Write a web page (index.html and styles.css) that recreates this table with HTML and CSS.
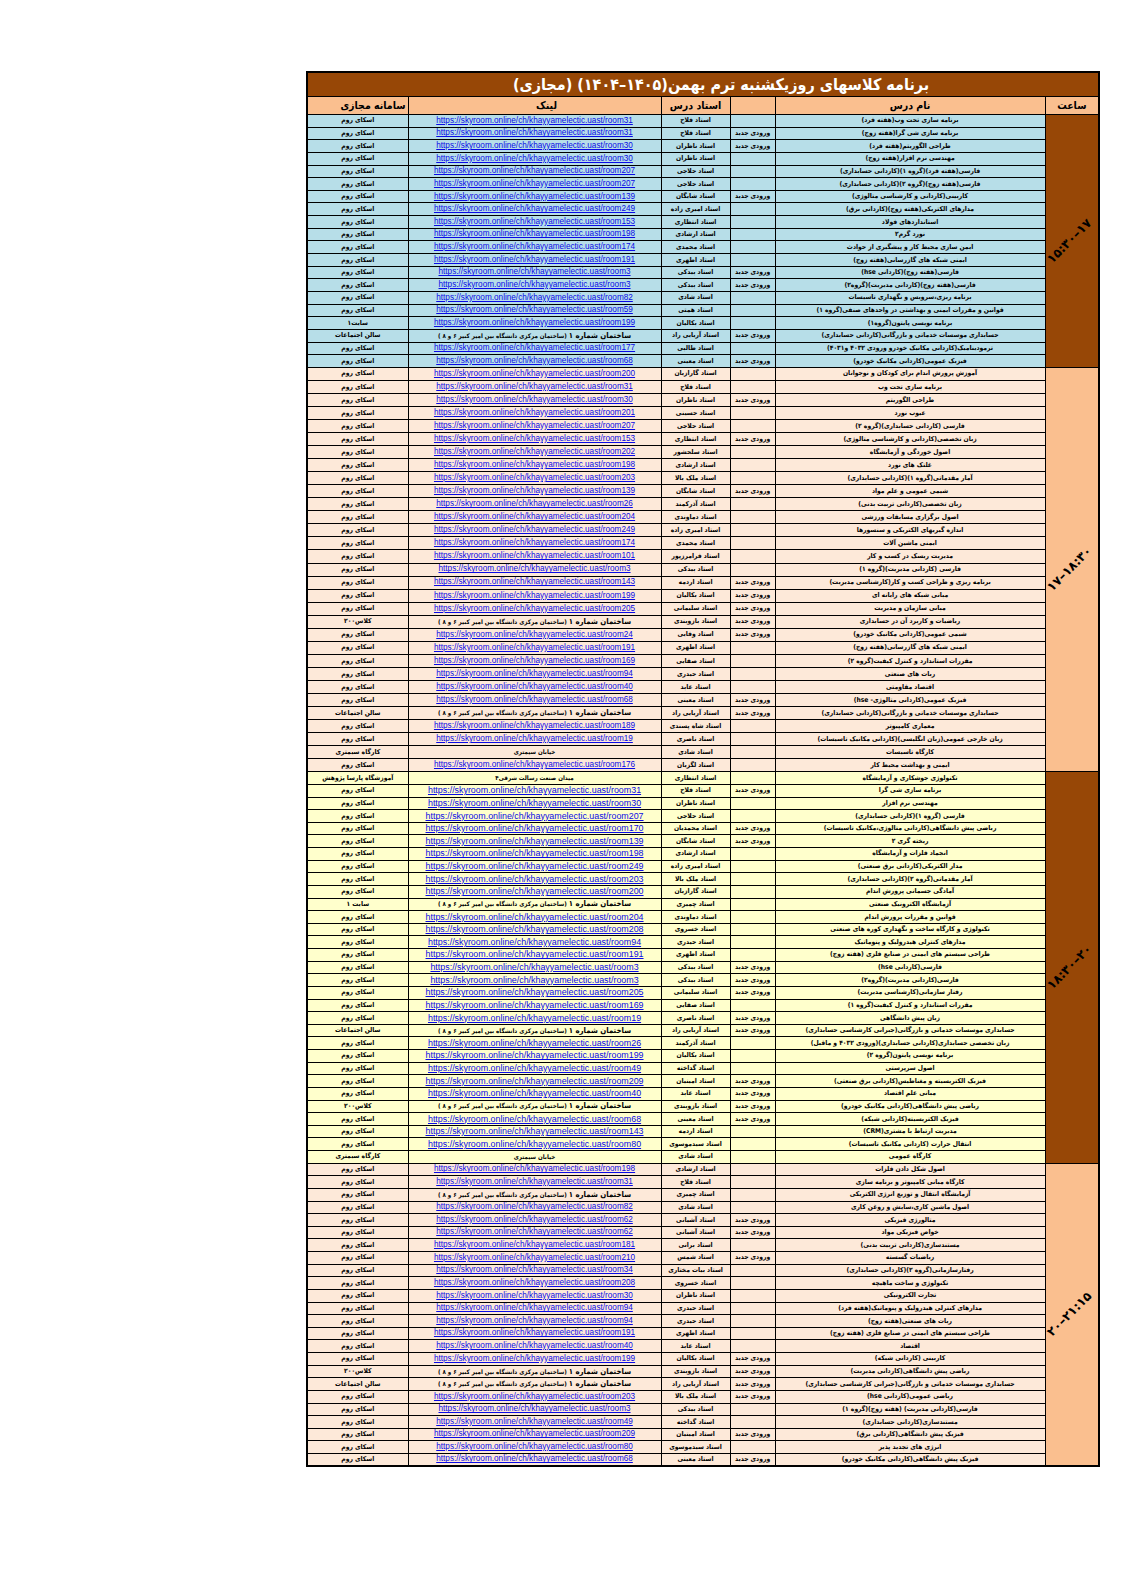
FILE: index.html
```html
<!DOCTYPE html>
<html lang="fa">
<head>
<meta charset="utf-8">
<title>برنامه کلاسهای روزیکشنبه</title>
<link rel="stylesheet" href="styles.css">
</head>
<body>
<table class="sheet" dir="rtl">
<colgroup>
<col class="c-time"><col class="c-name"><col class="c-new"><col class="c-teacher"><col class="c-link"><col class="c-plat">
</colgroup>
<thead>
<tr class="title-row"><td colspan="6">برنامه کلاسهای  روزیکشنبه ترم بهمن<bdo dir="ltr">(۱۴۰۴–۱۴۰۵)</bdo> (مجازی)</td></tr>
<tr class="head-row"><th>ساعت</th><th>نام درس</th><th></th><th>استاد درس</th><th class="h-link">لینک</th><th class="h-plat">سامانه مجازی</th></tr>
</thead>
<tbody class="s1">
<tr><td class="time" rowspan="20"><bdo dir="ltr" class="rot">۱۵:۳۰–۱۷</bdo></td><td>برنامه سازی تحت وب(هفته فرد)</td><td></td><td>استاد فلاح</td><td><a href="https://skyroom.online/ch/khayyamelectic.uast/room31">https://skyroom.online/ch/khayyamelectic.uast/room31</a></td><td>اسکای روم</td></tr>
<tr><td>برنامه سازی شی گرا(هفته زوج)</td><td>ورودی جدید</td><td>استاد فلاح</td><td><a href="https://skyroom.online/ch/khayyamelectic.uast/room31">https://skyroom.online/ch/khayyamelectic.uast/room31</a></td><td>اسکای روم</td></tr>
<tr><td>طراحی الگوریتم(هفته فرد)</td><td>ورودی جدید</td><td>استاد ناظران</td><td><a href="https://skyroom.online/ch/khayyamelectic.uast/room30">https://skyroom.online/ch/khayyamelectic.uast/room30</a></td><td>اسکای روم</td></tr>
<tr><td>مهندسی نرم افزار(هفته زوج)</td><td></td><td>استاد ناظران</td><td><a href="https://skyroom.online/ch/khayyamelectic.uast/room30">https://skyroom.online/ch/khayyamelectic.uast/room30</a></td><td>اسکای روم</td></tr>
<tr><td>فارسی(هفته فرد)(گروه ۱)(کاردانی حسابداری)</td><td></td><td>استاد حلاجی</td><td><a href="https://skyroom.online/ch/khayyamelectic.uast/room207">https://skyroom.online/ch/khayyamelectic.uast/room207</a></td><td>اسکای روم</td></tr>
<tr><td>فارسی(هفته زوج)(گروه ۲)(کاردانی حسابداری)</td><td></td><td>استاد حلاجی</td><td><a href="https://skyroom.online/ch/khayyamelectic.uast/room207">https://skyroom.online/ch/khayyamelectic.uast/room207</a></td><td>اسکای روم</td></tr>
<tr><td>کاربینی(کاردانی و کارشناسی متالوژی)</td><td>ورودی جدید</td><td>استاد شایگان</td><td><a href="https://skyroom.online/ch/khayyamelectic.uast/room139">https://skyroom.online/ch/khayyamelectic.uast/room139</a></td><td>اسکای روم</td></tr>
<tr><td>مدارهای الکتریکی(هفته زوج)(کاردانی برق)</td><td></td><td>استاد امیری زاده</td><td><a href="https://skyroom.online/ch/khayyamelectic.uast/room249">https://skyroom.online/ch/khayyamelectic.uast/room249</a></td><td>اسکای روم</td></tr>
<tr><td>استانداردهای فولاد</td><td></td><td>استاد انتظاری</td><td><a href="https://skyroom.online/ch/khayyamelectic.uast/room153">https://skyroom.online/ch/khayyamelectic.uast/room153</a></td><td>اسکای روم</td></tr>
<tr><td>نورد گرم۲</td><td></td><td>استاد ارشادی</td><td><a href="https://skyroom.online/ch/khayyamelectic.uast/room198">https://skyroom.online/ch/khayyamelectic.uast/room198</a></td><td>اسکای روم</td></tr>
<tr><td>ایمن سازی محیط کار و پیشگیری از حوادث</td><td></td><td>استاد محمدی</td><td><a href="https://skyroom.online/ch/khayyamelectic.uast/room174">https://skyroom.online/ch/khayyamelectic.uast/room174</a></td><td>اسکای روم</td></tr>
<tr><td>ایمنی شبکه های گازرسانی(هفته زوج)</td><td></td><td>استاد اطهری</td><td><a href="https://skyroom.online/ch/khayyamelectic.uast/room191">https://skyroom.online/ch/khayyamelectic.uast/room191</a></td><td>اسکای روم</td></tr>
<tr><td>فارسی(هفته زوج)(کاردانی hse)</td><td>ورودی جدید</td><td>استاد بیدکی</td><td><a href="https://skyroom.online/ch/khayyamelectic.uast/room3">https://skyroom.online/ch/khayyamelectic.uast/room3</a></td><td>اسکای روم</td></tr>
<tr><td>فارسی(هفته زوج)(کاردانی مدیریت)(گروه۲)</td><td>ورودی جدید</td><td>استاد بیدکی</td><td><a href="https://skyroom.online/ch/khayyamelectic.uast/room3">https://skyroom.online/ch/khayyamelectic.uast/room3</a></td><td>اسکای روم</td></tr>
<tr><td>برنامه ریزی،سرویس و نگهداری تاسیسات</td><td></td><td>استاد شادی</td><td><a href="https://skyroom.online/ch/khayyamelectic.uast/room82">https://skyroom.online/ch/khayyamelectic.uast/room82</a></td><td>اسکای روم</td></tr>
<tr><td>قوانین و مقررات ایمنی و بهداشتی در واحدهای صنفی(گروه ۱)</td><td></td><td>استاد همتی</td><td><a href="https://skyroom.online/ch/khayyamelectic.uast/room59">https://skyroom.online/ch/khayyamelectic.uast/room59</a></td><td>اسکای روم</td></tr>
<tr><td>برنامه نویسی پایتون(گروه۱)</td><td></td><td>استاد بکالیان</td><td><a href="https://skyroom.online/ch/khayyamelectic.uast/room199">https://skyroom.online/ch/khayyamelectic.uast/room199</a></td><td>سایت۱</td></tr>
<tr><td>حسابداری موسسات خدماتی و بازرگانی(کاردانی حسابداری)</td><td>ورودی جدید</td><td>استاد آریایی راد</td><td class="loc"><span class="big">ساختمان شماره ۱</span>   (ساختمان مرکزی دانشگاه بین امیر کبیر ۶ و ۸ )</td><td>سالن اجتماعات</td></tr>
<tr><td>ترمودینامیک(کاردانی مکانیک خودرو ورودی ۴۰۳۲ و۴۰۳۱)</td><td></td><td>استاد طالبی</td><td><a href="https://skyroom.online/ch/khayyamelectic.uast/room177">https://skyroom.online/ch/khayyamelectic.uast/room177</a></td><td>اسکای روم</td></tr>
<tr><td>فیزیک عمومی(کاردانی مکانیک خودرو)</td><td>ورودی جدید</td><td>استاد معینی</td><td><a href="https://skyroom.online/ch/khayyamelectic.uast/room68">https://skyroom.online/ch/khayyamelectic.uast/room68</a></td><td>اسکای روم</td></tr>
</tbody>
<tbody class="s2">
<tr><td class="time" rowspan="31"><bdo dir="ltr" class="rot">۱۷–۱۸:۳۰</bdo></td><td>آموزش پرورش اندام برای کودکان و نوجوانان</td><td></td><td>استاد گارازیان</td><td><a href="https://skyroom.online/ch/khayyamelectic.uast/room200">https://skyroom.online/ch/khayyamelectic.uast/room200</a></td><td>اسکای روم</td></tr>
<tr><td>برنامه سازی تحت وب</td><td></td><td>استاد فلاح</td><td><a href="https://skyroom.online/ch/khayyamelectic.uast/room31">https://skyroom.online/ch/khayyamelectic.uast/room31</a></td><td>اسکای روم</td></tr>
<tr><td>طراحی الگوریتم</td><td>ورودی جدید</td><td>استاد ناظران</td><td><a href="https://skyroom.online/ch/khayyamelectic.uast/room30">https://skyroom.online/ch/khayyamelectic.uast/room30</a></td><td>اسکای روم</td></tr>
<tr><td>عیوب نورد</td><td></td><td>استاد حسینی</td><td><a href="https://skyroom.online/ch/khayyamelectic.uast/room201">https://skyroom.online/ch/khayyamelectic.uast/room201</a></td><td>اسکای روم</td></tr>
<tr><td>فارسی (کاردانی حسابداری)(گروه ۲)</td><td></td><td>استاد حلاجی</td><td><a href="https://skyroom.online/ch/khayyamelectic.uast/room207">https://skyroom.online/ch/khayyamelectic.uast/room207</a></td><td>اسکای روم</td></tr>
<tr><td>زبان تخصصی(کاردانی و کارشناسی متالوژی)</td><td>ورودی جدید</td><td>استاد انتظاری</td><td><a href="https://skyroom.online/ch/khayyamelectic.uast/room153">https://skyroom.online/ch/khayyamelectic.uast/room153</a></td><td>اسکای روم</td></tr>
<tr><td>اصول خوردگی و آزمایشگاه</td><td></td><td>استاد سلحشور</td><td><a href="https://skyroom.online/ch/khayyamelectic.uast/room202">https://skyroom.online/ch/khayyamelectic.uast/room202</a></td><td>اسکای روم</td></tr>
<tr><td>غلتک های نورد</td><td></td><td>استاد ارشادی</td><td><a href="https://skyroom.online/ch/khayyamelectic.uast/room198">https://skyroom.online/ch/khayyamelectic.uast/room198</a></td><td>اسکای روم</td></tr>
<tr><td>آمار مقدماتی(گروه ۱)(کاردانی حسابداری)</td><td></td><td>استاد ملک بالا</td><td><a href="https://skyroom.online/ch/khayyamelectic.uast/room203">https://skyroom.online/ch/khayyamelectic.uast/room203</a></td><td>اسکای روم</td></tr>
<tr><td>شیمی عمومی و علم مواد</td><td>ورودی جدید</td><td>استاد شایگان</td><td><a href="https://skyroom.online/ch/khayyamelectic.uast/room139">https://skyroom.online/ch/khayyamelectic.uast/room139</a></td><td>اسکای روم</td></tr>
<tr><td>زبان تخصصی(کاردانی تربیت بدنی)</td><td></td><td>استاد آذرکمند</td><td><a href="https://skyroom.online/ch/khayyamelectic.uast/room26">https://skyroom.online/ch/khayyamelectic.uast/room26</a></td><td>اسکای روم</td></tr>
<tr><td>اصول برگزاری مسابقات ورزشی</td><td></td><td>استاد دماوندی</td><td><a href="https://skyroom.online/ch/khayyamelectic.uast/room204">https://skyroom.online/ch/khayyamelectic.uast/room204</a></td><td>اسکای روم</td></tr>
<tr><td>اندازه گیریهای الکتریکی و سنسورها</td><td></td><td>استاد امیری زاده</td><td><a href="https://skyroom.online/ch/khayyamelectic.uast/room249">https://skyroom.online/ch/khayyamelectic.uast/room249</a></td><td>اسکای روم</td></tr>
<tr><td>ایمنی ماشین آلات</td><td></td><td>استاد محمدی</td><td><a href="https://skyroom.online/ch/khayyamelectic.uast/room174">https://skyroom.online/ch/khayyamelectic.uast/room174</a></td><td>اسکای روم</td></tr>
<tr><td>مدیریت ریسک در کسب و کار</td><td></td><td>استاد فرامرزپور</td><td><a href="https://skyroom.online/ch/khayyamelectic.uast/room101">https://skyroom.online/ch/khayyamelectic.uast/room101</a></td><td>اسکای روم</td></tr>
<tr><td>فارسی (کاردانی مدیریت)(گروه ۱)</td><td></td><td>استاد بیدکی</td><td><a href="https://skyroom.online/ch/khayyamelectic.uast/room3">https://skyroom.online/ch/khayyamelectic.uast/room3</a></td><td>اسکای روم</td></tr>
<tr><td>برنامه ریزی و طراحی کسب و کار(کارشناسی مدیریت)</td><td>ورودی جدید</td><td>استاد اردمه</td><td><a href="https://skyroom.online/ch/khayyamelectic.uast/room143">https://skyroom.online/ch/khayyamelectic.uast/room143</a></td><td>اسکای روم</td></tr>
<tr><td>مبانی شبکه های رایانه ای</td><td>ورودی جدید</td><td>استاد بکالیان</td><td><a href="https://skyroom.online/ch/khayyamelectic.uast/room199">https://skyroom.online/ch/khayyamelectic.uast/room199</a></td><td>اسکای روم</td></tr>
<tr><td>مبانی سازمان و مدیریت</td><td>ورودی جدید</td><td>استاد سلیمانی</td><td><a href="https://skyroom.online/ch/khayyamelectic.uast/room205">https://skyroom.online/ch/khayyamelectic.uast/room205</a></td><td>اسکای روم</td></tr>
<tr><td>ریاضیات و کاربرد آن در حسابداری</td><td>ورودی جدید</td><td>استاد بازوبندی</td><td class="loc"><span class="big">ساختمان شماره ۱</span>   (ساختمان مرکزی دانشگاه بین امیر کبیر ۶ و ۸ )</td><td>کلاس۲۰۰</td></tr>
<tr><td>شیمی عمومی(کاردانی مکانیک خودرو)</td><td>ورودی جدید</td><td>استاد وفایی</td><td><a href="https://skyroom.online/ch/khayyamelectic.uast/room24">https://skyroom.online/ch/khayyamelectic.uast/room24</a></td><td>اسکای روم</td></tr>
<tr><td>ایمنی شبکه های گازرسانی(هفته زوج)</td><td></td><td>استاد اطهری</td><td><a href="https://skyroom.online/ch/khayyamelectic.uast/room191">https://skyroom.online/ch/khayyamelectic.uast/room191</a></td><td>اسکای روم</td></tr>
<tr><td>مقررات استاندارد و کنترل کیفیت(گروه ۲)</td><td></td><td>استاد صفایی</td><td><a href="https://skyroom.online/ch/khayyamelectic.uast/room169">https://skyroom.online/ch/khayyamelectic.uast/room169</a></td><td>اسکای روم</td></tr>
<tr><td>ربات های صنعتی</td><td></td><td>استاد حیدری</td><td><a href="https://skyroom.online/ch/khayyamelectic.uast/room94">https://skyroom.online/ch/khayyamelectic.uast/room94</a></td><td>اسکای روم</td></tr>
<tr><td>اقتصاد مقاومتی</td><td></td><td>استاد عابد</td><td><a href="https://skyroom.online/ch/khayyamelectic.uast/room40">https://skyroom.online/ch/khayyamelectic.uast/room40</a></td><td>اسکای روم</td></tr>
<tr><td>فیزیک عمومی(کاردانی متالوژی- hse)</td><td>ورودی جدید</td><td>استاد معینی</td><td><a href="https://skyroom.online/ch/khayyamelectic.uast/room68">https://skyroom.online/ch/khayyamelectic.uast/room68</a></td><td>اسکای روم</td></tr>
<tr><td>حسابداری موسسات خدماتی و بازرگانی(کاردانی حسابداری)</td><td>ورودی جدید</td><td>استاد آریایی راد</td><td class="loc"><span class="big">ساختمان شماره ۱</span>   (ساختمان مرکزی دانشگاه بین امیر کبیر ۶ و ۸ )</td><td>سالن اجتماعات</td></tr>
<tr><td>معماری کامپیوتر</td><td></td><td>استاد شاه پسندی</td><td><a href="https://skyroom.online/ch/khayyamelectic.uast/room189">https://skyroom.online/ch/khayyamelectic.uast/room189</a></td><td>اسکای روم</td></tr>
<tr><td>زبان خارجی عمومی(زبان انگلیسی)(کاردانی مکانیک تاسیسات)</td><td></td><td>استاد ناصری</td><td><a href="https://skyroom.online/ch/khayyamelectic.uast/room19">https://skyroom.online/ch/khayyamelectic.uast/room19</a></td><td>اسکای روم</td></tr>
<tr><td>کارگاه تاسیسات</td><td></td><td>استاد شادی</td><td class="loc">خیابان سیمتری</td><td>کارگاه سیمتری</td></tr>
<tr><td>ایمنی و بهداشت محیط کار</td><td></td><td>استاد لگزیان</td><td><a href="https://skyroom.online/ch/khayyamelectic.uast/room176">https://skyroom.online/ch/khayyamelectic.uast/room176</a></td><td>اسکای روم</td></tr>
</tbody>
<tbody class="s3">
<tr><td class="time" rowspan="31"><bdo dir="ltr" class="rot">۱۸:۳۰–۲۰</bdo></td><td>تکنولوژی جوشکاری و آزمایشگاه</td><td></td><td>استاد انتظاری</td><td class="loc">میدان صنعت رسالت شرقی۴</td><td>آموزشگاه پارسا پژوهش</td></tr>
<tr><td>برنامه سازی شی گرا</td><td>ورودی جدید</td><td>استاد فلاح</td><td><a href="https://skyroom.online/ch/khayyamelectic.uast/room31">https://skyroom.online/ch/khayyamelectic.uast/room31</a></td><td>اسکای روم</td></tr>
<tr><td>مهندسی نرم افزار</td><td></td><td>استاد ناظران</td><td><a href="https://skyroom.online/ch/khayyamelectic.uast/room30">https://skyroom.online/ch/khayyamelectic.uast/room30</a></td><td>اسکای روم</td></tr>
<tr><td>فارسی (گروه ۱)(کاردانی حسابداری)</td><td></td><td>استاد حلاجی</td><td><a href="https://skyroom.online/ch/khayyamelectic.uast/room207">https://skyroom.online/ch/khayyamelectic.uast/room207</a></td><td>اسکای روم</td></tr>
<tr><td>ریاضی پیش دانشگاهی(کاردانی متالوژی،مکانیک تاسیسات)</td><td>ورودی جدید</td><td>استاد محمدیان</td><td><a href="https://skyroom.online/ch/khayyamelectic.uast/room170">https://skyroom.online/ch/khayyamelectic.uast/room170</a></td><td>اسکای روم</td></tr>
<tr><td>ریخته گری ۲</td><td>ورودی جدید</td><td>استاد شایگان</td><td><a href="https://skyroom.online/ch/khayyamelectic.uast/room139">https://skyroom.online/ch/khayyamelectic.uast/room139</a></td><td>اسکای روم</td></tr>
<tr><td>انجماد فلزات و آزمایشگاه</td><td></td><td>استاد ارشادی</td><td><a href="https://skyroom.online/ch/khayyamelectic.uast/room198">https://skyroom.online/ch/khayyamelectic.uast/room198</a></td><td>اسکای روم</td></tr>
<tr><td>مدار الکتریکی(کاردانی برق صنعتی)</td><td></td><td>استاد امیری زاده</td><td><a href="https://skyroom.online/ch/khayyamelectic.uast/room249">https://skyroom.online/ch/khayyamelectic.uast/room249</a></td><td>اسکای روم</td></tr>
<tr><td>آمار مقدماتی(گروه ۲)(کاردانی حسابداری)</td><td></td><td>استاد ملک بالا</td><td><a href="https://skyroom.online/ch/khayyamelectic.uast/room203">https://skyroom.online/ch/khayyamelectic.uast/room203</a></td><td>اسکای روم</td></tr>
<tr><td>آمادگی جسمانی پرورش اندام</td><td></td><td>استاد گارازیان</td><td><a href="https://skyroom.online/ch/khayyamelectic.uast/room200">https://skyroom.online/ch/khayyamelectic.uast/room200</a></td><td>اسکای روم</td></tr>
<tr><td>آزمایشگاه الکترونیک صنعتی</td><td></td><td>استاد چمیری</td><td class="loc"><span class="big">ساختمان شماره ۱</span>   (ساختمان مرکزی دانشگاه بین امیر کبیر ۶ و ۸ )</td><td>سایت ۱</td></tr>
<tr><td>قوانین و مقررات پرورش اندام</td><td></td><td>استاد دماوندی</td><td><a href="https://skyroom.online/ch/khayyamelectic.uast/room204">https://skyroom.online/ch/khayyamelectic.uast/room204</a></td><td>اسکای روم</td></tr>
<tr><td>تکنولوژی و کارگاه ساخت و نگهداری کوره های صنعتی</td><td></td><td>استاد خسروی</td><td><a href="https://skyroom.online/ch/khayyamelectic.uast/room208">https://skyroom.online/ch/khayyamelectic.uast/room208</a></td><td>اسکای روم</td></tr>
<tr><td>مدارهای کنترلی هیدرولیک و پنوماتیک</td><td></td><td>استاد حیدری</td><td><a href="https://skyroom.online/ch/khayyamelectic.uast/room94">https://skyroom.online/ch/khayyamelectic.uast/room94</a></td><td>اسکای روم</td></tr>
<tr><td>طراحی سیستم های ایمنی در صنایع فلزی (هفته زوج)</td><td></td><td>استاد اطهری</td><td><a href="https://skyroom.online/ch/khayyamelectic.uast/room191">https://skyroom.online/ch/khayyamelectic.uast/room191</a></td><td>اسکای روم</td></tr>
<tr><td>فارسی(کاردانی hse)</td><td>ورودی جدید</td><td>استاد بیدکی</td><td><a href="https://skyroom.online/ch/khayyamelectic.uast/room3">https://skyroom.online/ch/khayyamelectic.uast/room3</a></td><td>اسکای روم</td></tr>
<tr><td>فارسی(کاردانی مدیریت)(گروه۲)</td><td>ورودی جدید</td><td>استاد بیدکی</td><td><a href="https://skyroom.online/ch/khayyamelectic.uast/room3">https://skyroom.online/ch/khayyamelectic.uast/room3</a></td><td>اسکای روم</td></tr>
<tr><td>رفتار سازمانی(کارشناسی مدیریت)</td><td>ورودی جدید</td><td>استاد سلیمانی</td><td><a href="https://skyroom.online/ch/khayyamelectic.uast/room205">https://skyroom.online/ch/khayyamelectic.uast/room205</a></td><td>اسکای روم</td></tr>
<tr><td>مقررات استاندارد و کنترل کیفیت(گروه ۱)</td><td></td><td>استاد صفایی</td><td><a href="https://skyroom.online/ch/khayyamelectic.uast/room169">https://skyroom.online/ch/khayyamelectic.uast/room169</a></td><td>اسکای روم</td></tr>
<tr><td>زبان پیش دانشگاهی</td><td>ورودی جدید</td><td>استاد ناصری</td><td><a href="https://skyroom.online/ch/khayyamelectic.uast/room19">https://skyroom.online/ch/khayyamelectic.uast/room19</a></td><td>اسکای روم</td></tr>
<tr><td>حسابداری موسسات خدماتی و بازرگانی(جبرانی کارشناسی حسابداری)</td><td>ورودی جدید</td><td>استاد آریایی راد</td><td class="loc"><span class="big">ساختمان شماره ۱</span>   (ساختمان مرکزی دانشگاه بین امیر کبیر ۶ و ۸ )</td><td>سالن اجتماعات</td></tr>
<tr><td>زبان تخصصی حسابداری(کاردانی حسابداری)(ورودی ۴۰۳۲ و ماقبل)</td><td></td><td>استاد آذرکمند</td><td><a href="https://skyroom.online/ch/khayyamelectic.uast/room26">https://skyroom.online/ch/khayyamelectic.uast/room26</a></td><td>اسکای روم</td></tr>
<tr><td>برنامه نویسی پایتون(گروه ۲)</td><td></td><td>استاد بکالیان</td><td><a href="https://skyroom.online/ch/khayyamelectic.uast/room199">https://skyroom.online/ch/khayyamelectic.uast/room199</a></td><td>اسکای روم</td></tr>
<tr><td>اصول سرپرستی</td><td></td><td>استاد گداخته</td><td><a href="https://skyroom.online/ch/khayyamelectic.uast/room49">https://skyroom.online/ch/khayyamelectic.uast/room49</a></td><td>اسکای روم</td></tr>
<tr><td>فیزیک الکتریسیته و مغناطیس(کاردانی برق صنعتی)</td><td>ورودی جدید</td><td>استاد امینیان</td><td><a href="https://skyroom.online/ch/khayyamelectic.uast/room209">https://skyroom.online/ch/khayyamelectic.uast/room209</a></td><td>اسکای روم</td></tr>
<tr><td>مبانی علم اقتصاد</td><td>ورودی جدید</td><td>استاد عابد</td><td><a href="https://skyroom.online/ch/khayyamelectic.uast/room40">https://skyroom.online/ch/khayyamelectic.uast/room40</a></td><td>اسکای روم</td></tr>
<tr><td>ریاضی پیش دانشگاهی(کاردانی مکانیک خودرو)</td><td>ورودی جدید</td><td>استاد بازوبندی</td><td class="loc"><span class="big">ساختمان شماره ۱</span>   (ساختمان مرکزی دانشگاه بین امیر کبیر ۶ و ۸ )</td><td>کلاس۲۰۰</td></tr>
<tr><td>فیزیک الکتریسیته(کاردانی شبکه)</td><td>ورودی جدید</td><td>استاد معینی</td><td><a href="https://skyroom.online/ch/khayyamelectic.uast/room68">https://skyroom.online/ch/khayyamelectic.uast/room68</a></td><td>اسکای روم</td></tr>
<tr><td>مدیریت ارتباط با مشتری(CRM)</td><td></td><td>استاد اردمه</td><td><a href="https://skyroom.online/ch/khayyamelectic.uast/room143">https://skyroom.online/ch/khayyamelectic.uast/room143</a></td><td>اسکای روم</td></tr>
<tr><td>انتقال حرارت (کاردانی مکانیک تاسیسات)</td><td></td><td>استاد سیدموسوی</td><td><a href="https://skyroom.online/ch/khayyamelectic.uast/room80">https://skyroom.online/ch/khayyamelectic.uast/room80</a></td><td>اسکای روم</td></tr>
<tr><td>کارگاه عمومی</td><td></td><td>استاد شادی</td><td class="loc">خیابان سیمتری</td><td>کارگاه سیمتری</td></tr>
</tbody>
<tbody class="s4">
<tr><td class="time" rowspan="24"><bdo dir="ltr" class="rot">۲۰–۲۱:۱۵</bdo></td><td>اصول شکل دادن فلزات</td><td></td><td>استاد ارشادی</td><td><a href="https://skyroom.online/ch/khayyamelectic.uast/room198">https://skyroom.online/ch/khayyamelectic.uast/room198</a></td><td>اسکای روم</td></tr>
<tr><td>کارگاه مبانی کامپیوتر و برنامه سازی</td><td></td><td>استاد فلاح</td><td><a href="https://skyroom.online/ch/khayyamelectic.uast/room31">https://skyroom.online/ch/khayyamelectic.uast/room31</a></td><td>اسکای روم</td></tr>
<tr><td>آزمایشگاه انتقال و توزیع انرژی الکتریکی</td><td></td><td>استاد چمیری</td><td class="loc"><span class="big">ساختمان شماره ۱</span>   (ساختمان مرکزی دانشگاه بین امیر کبیر ۶ و ۸ )</td><td>اسکای روم</td></tr>
<tr><td>اصول ماشین کاری،سایش و روغن کاری</td><td></td><td>استاد شادی</td><td><a href="https://skyroom.online/ch/khayyamelectic.uast/room82">https://skyroom.online/ch/khayyamelectic.uast/room82</a></td><td>اسکای روم</td></tr>
<tr><td>متالورژی فیزیکی</td><td>ورودی جدید</td><td>استاد آشیانی</td><td><a href="https://skyroom.online/ch/khayyamelectic.uast/room62">https://skyroom.online/ch/khayyamelectic.uast/room62</a></td><td>اسکای روم</td></tr>
<tr><td>خواص فیزیکی مواد</td><td>ورودی جدید</td><td>استاد آشیانی</td><td><a href="https://skyroom.online/ch/khayyamelectic.uast/room62">https://skyroom.online/ch/khayyamelectic.uast/room62</a></td><td>اسکای روم</td></tr>
<tr><td>مستندسازی(کاردانی تربیت بدنی)</td><td></td><td>استاد برانی</td><td><a href="https://skyroom.online/ch/khayyamelectic.uast/room181">https://skyroom.online/ch/khayyamelectic.uast/room181</a></td><td>اسکای روم</td></tr>
<tr><td>ریاضیات گسسته</td><td>ورودی جدید</td><td>استاد شمس</td><td><a href="https://skyroom.online/ch/khayyamelectic.uast/room210">https://skyroom.online/ch/khayyamelectic.uast/room210</a></td><td>اسکای روم</td></tr>
<tr><td>رفتارسازمانی(گروه ۲)(کاردانی حسابداری)</td><td></td><td>استاد بیات مختاری</td><td><a href="https://skyroom.online/ch/khayyamelectic.uast/room34">https://skyroom.online/ch/khayyamelectic.uast/room34</a></td><td>اسکای روم</td></tr>
<tr><td>تکنولوژی و ساخت ماهیچه</td><td></td><td>استاد خسروی</td><td><a href="https://skyroom.online/ch/khayyamelectic.uast/room208">https://skyroom.online/ch/khayyamelectic.uast/room208</a></td><td>اسکای روم</td></tr>
<tr><td>تجارت الکترونیکی</td><td></td><td>استاد ناظران</td><td><a href="https://skyroom.online/ch/khayyamelectic.uast/room30">https://skyroom.online/ch/khayyamelectic.uast/room30</a></td><td>اسکای روم</td></tr>
<tr><td>مدارهای کنترلی هیدرولیک و پنوماتیک(هفته فرد)</td><td></td><td>استاد حیدری</td><td><a href="https://skyroom.online/ch/khayyamelectic.uast/room94">https://skyroom.online/ch/khayyamelectic.uast/room94</a></td><td>اسکای روم</td></tr>
<tr><td>ربات های صنعتی(هفته زوج)</td><td></td><td>استاد حیدری</td><td><a href="https://skyroom.online/ch/khayyamelectic.uast/room94">https://skyroom.online/ch/khayyamelectic.uast/room94</a></td><td>اسکای روم</td></tr>
<tr><td>طراحی سیستم های ایمنی در صنایع فلزی (هفته زوج)</td><td></td><td>استاد اطهری</td><td><a href="https://skyroom.online/ch/khayyamelectic.uast/room191">https://skyroom.online/ch/khayyamelectic.uast/room191</a></td><td>اسکای روم</td></tr>
<tr><td>اقتصاد</td><td></td><td>استاد عابد</td><td><a href="https://skyroom.online/ch/khayyamelectic.uast/room40">https://skyroom.online/ch/khayyamelectic.uast/room40</a></td><td>اسکای روم</td></tr>
<tr><td>کاربینی (کاردانی شبکه)</td><td>ورودی جدید</td><td>استاد بکالیان</td><td><a href="https://skyroom.online/ch/khayyamelectic.uast/room199">https://skyroom.online/ch/khayyamelectic.uast/room199</a></td><td>اسکای روم</td></tr>
<tr><td>ریاضی پیش دانشگاهی(کاردانی مدیریت)</td><td>ورودی جدید</td><td>استاد بازوبندی</td><td class="loc"><span class="big">ساختمان شماره ۱</span>   (ساختمان مرکزی دانشگاه بین امیر کبیر ۶ و ۸ )</td><td>کلاس۲۰۰</td></tr>
<tr><td>حسابداری موسسات خدماتی و بازرگانی(جبرانی کارشناسی حسابداری)</td><td>ورودی جدید</td><td>استاد آریایی راد</td><td class="loc"><span class="big">ساختمان شماره ۱</span>   (ساختمان مرکزی دانشگاه بین امیر کبیر ۶ و ۸ )</td><td>سالن اجتماعات</td></tr>
<tr><td>ریاضی عمومی(کاردانی hse)</td><td>ورودی جدید</td><td>استاد ملک بالا</td><td><a href="https://skyroom.online/ch/khayyamelectic.uast/room203">https://skyroom.online/ch/khayyamelectic.uast/room203</a></td><td>اسکای روم</td></tr>
<tr><td>فارسی(کاردانی مدیریت) (هفته زوج)(گروه ۱)</td><td></td><td>استاد بیدکی</td><td><a href="https://skyroom.online/ch/khayyamelectic.uast/room3">https://skyroom.online/ch/khayyamelectic.uast/room3</a></td><td>اسکای روم</td></tr>
<tr><td>مستندسازی(کاردانی حسابداری)</td><td></td><td>استاد گداخته</td><td><a href="https://skyroom.online/ch/khayyamelectic.uast/room49">https://skyroom.online/ch/khayyamelectic.uast/room49</a></td><td>اسکای روم</td></tr>
<tr><td>فیزیک پیش دانشگاهی(کاردانی برق)</td><td>ورودی جدید</td><td>استاد امینیان</td><td><a href="https://skyroom.online/ch/khayyamelectic.uast/room209">https://skyroom.online/ch/khayyamelectic.uast/room209</a></td><td>اسکای روم</td></tr>
<tr><td>انرژی های تجدید پذیر</td><td></td><td>استاد سیدموسوی</td><td><a href="https://skyroom.online/ch/khayyamelectic.uast/room80">https://skyroom.online/ch/khayyamelectic.uast/room80</a></td><td>اسکای روم</td></tr>
<tr><td>فیزیک پیش دانشگاهی(کاردانی مکانیک خودرو)</td><td>ورودی جدید</td><td>استاد معینی</td><td><a href="https://skyroom.online/ch/khayyamelectic.uast/room68">https://skyroom.online/ch/khayyamelectic.uast/room68</a></td><td>اسکای روم</td></tr>
</tbody>
</table>
</body>
</html>
```
FILE: styles.css
```css
body {
  margin: 0;
  background: #ffffff;
  font-family: "DejaVu Sans Condensed", "DejaVu Sans", sans-serif;
  color: #000;
}

.sheet {
  margin: 71px 0 0 306px;
  width: 792px;
  border-collapse: collapse;
  table-layout: fixed;
  border: 2px solid #000;
}

.c-time { width: 54px; }
.c-name { width: 270px; }
.c-new { width: 45px; }
.c-teacher { width: 69px; }
.c-link { width: 253px; }
.c-plat { width: 101px; }

.sheet td,
.sheet th {
  border: 1px solid #000;
  padding: 0;
  text-align: center;
  vertical-align: middle;
  white-space: nowrap;
  overflow: hidden;
  line-height: 1;
}

.title-row td {
  height: 23px;
  padding-left: 36px;
  background: #974706;
  color: #ffffff;
  font-size: 16px;
  font-weight: bold;
}

.head-row th {
  height: 17px;
  background: #fabf8f;
  font-size: 10.5px;
  font-weight: bold;
}

.head-row th.h-plat {
  text-align: right;
  padding-right: 2px;
}

.head-row th.h-link {
  padding-left: 24px;
}

tbody td {
  font-size: 6.7px;
  font-weight: bold;
}

tbody a {
  font-family: "Liberation Sans", Arial, sans-serif;
  font-size: 8.2px;
  font-weight: normal;
  color: #0a0ae6;
  text-decoration: underline;
}

.loc {
  font-size: 6.2px;
}

.loc .big {
  font-size: 7.8px;
}

.s1 tr { height: 12.65px; }
.s2 tr { height: 13.05px; }
.s3 tr { height: 12.63px; }
.s4 tr { height: 12.64px; }

.s1 td { background: #b7dee8; }
.s2 td { background: #fde9d9; }
.s3 td { background: #ffffcc; }
.s4 td { background: #fde9d9; }

.s3 a { font-size: 8.9px; }

.sheet td.time {
  background: #974706;
  overflow: visible;
}

.s2 td.time,
.s4 td.time {
  background: #fabf8f;
}

.rot {
  display: inline-block;
  transform: rotate(-45deg);
  font-family: "DejaVu Sans", sans-serif;
  font-size: 12.5px;
  font-weight: bold;
  color: #000;
  white-space: nowrap;
}
```
